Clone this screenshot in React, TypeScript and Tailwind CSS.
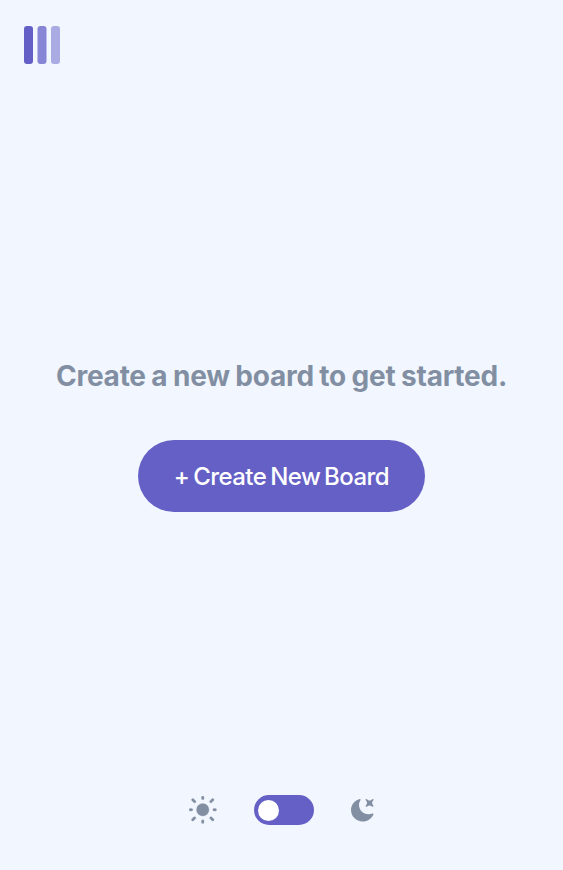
export default function App() {
  return (
    <main className="flex h-screen w-full flex-col bg-[#f2f7ff] font-['Inter',sans-serif]">
      <header className="flex h-[90px] items-center px-6">
        <svg className="h-[38px] w-9" viewBox="0 0 36 38" fill="#635fc7" aria-label="Logo">
          <rect width="9" height="38" rx="3" />
          <rect x="13.5" width="9" height="38" rx="3" opacity=".75" />
          <rect x="27" width="9" height="38" rx="3" opacity=".5" />
        </svg>
      </header>
      <section className="flex flex-1 flex-col items-center pt-[264px]">
        <h1 className="flex h-[44px] items-center justify-center whitespace-nowrap text-[28px] font-bold tracking-[-0.25px] [word-spacing:-0.8px] text-[#828fa3]">Create a new board to get started.</h1>
        <button className="mt-[42px] h-[72px] w-[287px] whitespace-nowrap rounded-full bg-[#6560c6] pt-0.5 text-[24px] font-medium tracking-[-0.55px] [word-spacing:-2px] text-white">+ Create New Board</button>
      </section>
      <footer className="mb-[45px] flex h-[30px] items-center justify-center gap-9">
        <svg className="size-[28.5px]" viewBox="0 0 19 19" fill="#828fa3" stroke="#828fa3" strokeWidth=".2">
          <path d="M9.167 15.833a.833.833 0 0 1 .833.834v.833a.833.833 0 0 1-1.667 0v-.833a.833.833 0 0 1 .834-.834ZM3.75 13.75a.833.833 0 0 1 .59 1.422l-1.25 1.25a.833.833 0 0 1-1.18-1.178l1.25-1.25a.833.833 0 0 1 .59-.244Zm10.833 0c.221 0 .433.088.59.244l1.25 1.25a.833.833 0 0 1-1.179 1.178l-1.25-1.25a.833.833 0 0 1 .59-1.422ZM9.167 5a4.167 4.167 0 1 1 0 8.334 4.167 4.167 0 0 1 0-8.334Zm-7.5 3.333a.833.833 0 0 1 0 1.667H.833a.833.833 0 1 1 0-1.667h.834Zm15.833 0a.833.833 0 0 1 0 1.667h-.833a.833.833 0 0 1 0-1.667h.833Zm-1.667-6.666a.833.833 0 0 1 .59 1.422l-1.25 1.25a.833.833 0 1 1-1.179-1.178l1.25-1.25a.833.833 0 0 1 .59-.244Zm-13.333 0c.221 0 .433.088.59.244l1.25 1.25a.833.833 0 0 1-1.18 1.178L1.91 3.09a.833.833 0 0 1 .59-1.422ZM9.167 0A.833.833 0 0 1 10 .833v.834a.833.833 0 1 1-1.667 0V.833A.833.833 0 0 1 9.167 0Z" />
        </svg>
        <button aria-label="Toggle theme" className="flex h-[30px] w-[60px] items-center rounded-full bg-[#6560c6] px-1">
          <span className="size-[21px] rounded-full bg-white" />
        </button>
        <svg className="size-6" viewBox="0 0 16 16" fill="#828fa3">
          <path d="M6.474.682c.434-.11.718.406.481.78A6.067 6.067 0 0 0 6.01 4.72c0 3.418 2.827 6.187 6.314 6.187.89.002 1.77-.182 2.584-.54.408-.18.894.165.724.57-1.16 2.775-3.944 4.73-7.194 4.73-4.292 0-7.771-3.41-7.771-7.615 0-3.541 2.466-6.518 5.807-7.37Zm8.433.07c.442-.294.969.232.674.674l-.525.787a1.943 1.943 0 0 0 0 2.157l.525.788c.295.441-.232.968-.674.673l-.787-.525a1.943 1.943 0 0 0-2.157 0l-.786.525c-.442.295-.97-.232-.675-.673l.525-.788a1.943 1.943 0 0 0 0-2.157l-.525-.787c-.295-.442.232-.968.674-.673l.787.525a1.943 1.943 0 0 0 2.157 0Z" />
        </svg>
      </footer>
    </main>
  );
}
